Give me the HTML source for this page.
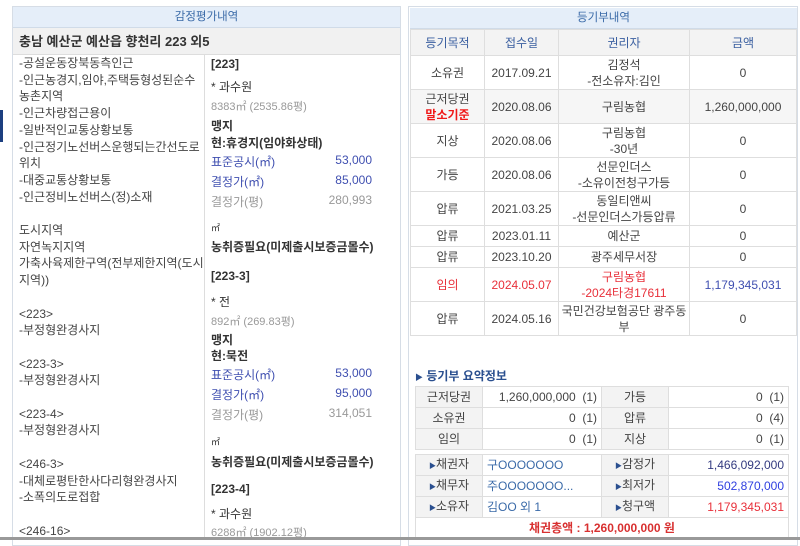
<!DOCTYPE html>
<html><head><meta charset="utf-8"><style>
*{margin:0;padding:0;box-sizing:border-box}
body{width:800px;height:540px;overflow:hidden;background:#fff;font-family:"Liberation Sans","Noto Sans CJK KR",sans-serif;font-size:12px;color:#333;position:relative}
.a{position:absolute;white-space:nowrap}
.hd{background:#e5eef9;color:#3a6aa8;text-align:center;line-height:20px;font-size:11.5px;border-bottom:1px solid #d0dbe8}
table{border-collapse:collapse;position:absolute}
td{border:1px solid #dedede;text-align:center;color:#444;font-size:12px;line-height:16px}
.b{color:#3f4fb0}.r{color:#e8303a}.g{color:#999}.k{color:#333;font-weight:bold}
</style></head><body>
<div class="a" style="left:0;top:110px;width:3px;height:32px;background:#1c3f80"></div>
<div class="a" style="left:12px;top:6px;width:389px;height:540px;border:1px solid #d6dde6"></div>
<div class="a hd" style="left:13px;top:7px;width:387px;height:21px">감정평가내역</div>
<div class="a" style="left:13px;top:28px;width:387px;height:27px;background:#f1f1f1;border-bottom:1px solid #ddd;font-size:13px;font-weight:bold;padding-left:6px;line-height:27px;color:#333">충남 예산군 예산읍 향천리 223 외5</div>
<div class="a" style="left:204px;top:55px;width:1px;height:485px;background:#ddd"></div>
<div class="a" style="left:19px;top:55px;line-height:16.7px;color:#444">-공설운동장북동측인근<br>-인근농경지,임야,주택등형성된순수<br>농촌지역<br>-인근차량접근용이<br>-일반적인교통상황보통<br>-인근정기노선버스운행되는간선도로<br>위치<br>-대중교통상황보통<br>-인근정비노선버스(정)소재<br><br>도시지역<br>자연녹지지역<br>가축사육제한구역(전부제한지역(도시<br>지역))<br><br>&lt;223&gt;<br>-부정형완경사지<br><br>&lt;223-3&gt;<br>-부정형완경사지<br><br>&lt;223-4&gt;<br>-부정형완경사지<br><br>&lt;246-3&gt;<br>-대체로평탄한사다리형완경사지<br>-소폭의도로접합<br><br>&lt;246-16&gt;</div>
<div class="a k" style="left:211px;top:57px">[223]</div>
<div class="a" style="left:211px;top:78px">* 과수원</div>
<div class="a g" style="left:211px;top:98px;font-size:11px">8383㎡ (2535.86평)</div>
<div class="a k" style="left:211px;top:117px">맹지</div>
<div class="a k" style="left:211px;top:134px">현:휴경지(임야화상태)</div>
<div class="a b" style="left:211px;top:153px">표준공시(㎡)</div><div class="a b" style="left:330px;top:153px;width:42px;text-align:right">53,000</div>
<div class="a b" style="left:211px;top:173px">결정가(㎡)</div><div class="a b" style="left:330px;top:173px;width:42px;text-align:right">85,000</div>
<div class="a g" style="left:211px;top:193px">결정가(평)</div><div class="a g" style="left:320px;top:193px;width:52px;text-align:right">280,993</div>
<div class="a" style="left:211px;top:221px;font-size:9px">㎡</div>
<div class="a k" style="left:211px;top:238px">농취증필요(미제출시보증금몰수)</div>
<div class="a k" style="left:211px;top:269px">[223-3]</div>
<div class="a" style="left:211px;top:293px">* 전</div>
<div class="a g" style="left:211px;top:313px;font-size:11px">892㎡ (269.83평)</div>
<div class="a k" style="left:211px;top:331px">맹지</div>
<div class="a k" style="left:211px;top:347px">현:묵전</div>
<div class="a b" style="left:211px;top:366px">표준공시(㎡)</div><div class="a b" style="left:330px;top:366px;width:42px;text-align:right">53,000</div>
<div class="a b" style="left:211px;top:386px">결정가(㎡)</div><div class="a b" style="left:330px;top:386px;width:42px;text-align:right">95,000</div>
<div class="a g" style="left:211px;top:406px">결정가(평)</div><div class="a g" style="left:320px;top:406px;width:52px;text-align:right">314,051</div>
<div class="a" style="left:211px;top:435px;font-size:9px">㎡</div>
<div class="a k" style="left:211px;top:453px">농취증필요(미제출시보증금몰수)</div>
<div class="a k" style="left:211px;top:482px">[223-4]</div>
<div class="a" style="left:211px;top:505px">* 과수원</div>
<div class="a g" style="left:211px;top:524px;font-size:11px">6288㎡ (1902.12평)</div>

<div class="a" style="left:408px;top:6px;width:390px;height:540px;border:1px solid #d6dde6"></div>
<div class="a hd" style="left:410px;top:8px;width:387px;height:21px">등기부내역</div>
<table style="left:410px;top:29px;width:387px">
<tr style="height:26px;background:#f3f3f3"><td style="width:74px;color:#3a5fa0">등기목적</td><td style="width:74px;color:#3a5fa0">접수일</td><td style="width:131px;color:#3a5fa0">권리자</td><td style="color:#3a5fa0">금액</td></tr>
<tr style="height:34px"><td>소유권</td><td>2017.09.21</td><td>김정석<br>-전소유자:김인</td><td>0</td></tr>
<tr style="height:34px;background:#f6f6f6"><td>근저당권<br><b style="color:#f01818">말소기준</b></td><td>2020.08.06</td><td>구림농협</td><td>1,260,000,000</td></tr>
<tr style="height:34px"><td>지상</td><td>2020.08.06</td><td>구림농협<br>-30년</td><td>0</td></tr>
<tr style="height:34px"><td>가등</td><td>2020.08.06</td><td>선문인더스<br>-소유이전청구가등</td><td>0</td></tr>
<tr style="height:34px"><td>압류</td><td>2021.03.25</td><td>동일티앤씨<br>-선문인더스가등압류</td><td>0</td></tr>
<tr style="height:21px"><td>압류</td><td>2023.01.11</td><td>예산군</td><td>0</td></tr>
<tr style="height:21px"><td>압류</td><td>2023.10.20</td><td>광주세무서장</td><td>0</td></tr>
<tr style="height:34px"><td class="r">임의</td><td class="r">2024.05.07</td><td class="r">구림농협<br>-2024타경17611</td><td class="b">1,179,345,031</td></tr>
<tr style="height:34px"><td>압류</td><td>2024.05.16</td><td>국민건강보험공단 광주동<br>부</td><td>0</td></tr>
</table>
<div class="a" style="left:415px;top:367px;font-size:12px;font-weight:bold;color:#2a4f8f"><span style="font-size:8px">▶</span> 등기부 요약정보</div>
<table style="left:415px;top:386px;width:374px">
<tr style="height:21px"><td style="width:67px;background:#f3f3f3">근저당권</td><td style="width:119px;text-align:right;padding-right:4px">1,260,000,000 &nbsp;(1)</td><td style="width:67px;background:#f3f3f3">가등</td><td style="text-align:right;padding-right:4px">0 &nbsp;(1)</td></tr>
<tr style="height:21px"><td style="background:#f3f3f3">소유권</td><td style="text-align:right;padding-right:4px">0 &nbsp;(1)</td><td style="background:#f3f3f3">압류</td><td style="text-align:right;padding-right:4px">0 &nbsp;(4)</td></tr>
<tr style="height:21px"><td style="background:#f3f3f3">임의</td><td style="text-align:right;padding-right:4px">0 &nbsp;(1)</td><td style="background:#f3f3f3">지상</td><td style="text-align:right;padding-right:4px">0 &nbsp;(1)</td></tr>
</table>
<table style="left:415px;top:454px;width:374px">
<tr style="height:21px"><td style="width:67px;background:#f3f3f3"><span style="font-size:7px;color:#2a4f8f">▶</span>채권자</td><td style="width:119px;text-align:left;padding-left:4px;color:#3a6aa8">구OOOOOOO</td><td style="width:67px;background:#f3f3f3"><span style="font-size:7px;color:#2a4f8f">▶</span>감정가</td><td style="text-align:right;padding-right:4px;color:#333a80">1,466,092,000</td></tr>
<tr style="height:21px"><td style="background:#f3f3f3"><span style="font-size:7px;color:#2a4f8f">▶</span>채무자</td><td style="text-align:left;padding-left:4px;color:#3a6aa8">주OOOOOOO...</td><td style="background:#f3f3f3"><span style="font-size:7px;color:#2a4f8f">▶</span>최저가</td><td style="text-align:right;padding-right:4px;color:#3040e0">502,870,000</td></tr>
<tr style="height:21px"><td style="background:#f3f3f3"><span style="font-size:7px;color:#2a4f8f">▶</span>소유자</td><td style="text-align:left;padding-left:4px;color:#3a6aa8">김OO 외 1</td><td style="background:#f3f3f3"><span style="font-size:7px;color:#2a4f8f">▶</span>청구액</td><td style="text-align:right;padding-right:4px;color:#e8303a">1,179,345,031</td></tr>
<tr style="height:21px"><td colspan="4" style="color:#d83030;font-weight:bold">채권총액 : 1,260,000,000 원</td></tr>
</table>
<div class="a" style="left:0;top:537px;width:800px;height:3px;background:#999"></div>
</body></html>
